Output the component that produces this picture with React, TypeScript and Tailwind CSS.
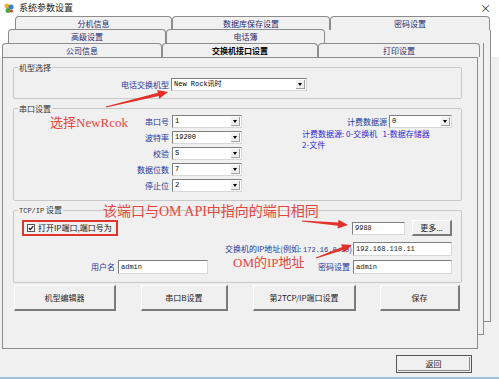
import React from "react";

const ui = "font-['Noto_Sans_CJK_SC','Noto_Sans',sans-serif]";
const mono = "font-['Liberation_Mono','Noto_Sans_CJK_SC',monospace]";
const red = "font-['Liberation_Serif','Noto_Sans_CJK_SC',serif]";

const arrow = (x1: number, y1: number, x2: number, y2: number) => {
  const dx = x2 - x1;
  const dy = y2 - y1;
  const len = Math.hypot(dx, dy);
  const ux = dx / len;
  const uy = dy / len;
  const nx = -uy;
  const ny = ux;
  const nkx = x2 - ux * 10;
  const nky = y2 - uy * 10;
  const p = (x: number, y: number) => `${x.toFixed(1)},${y.toFixed(1)}`;
  return [
    p(x1 + nx * 0.4, y1 + ny * 0.4),
    p(nkx + nx * 1.6, nky + ny * 1.6),
    p(nkx + nx * 4.5, nky + ny * 4.5),
    p(x2, y2),
    p(nkx - nx * 4.5, nky - ny * 4.5),
    p(nkx - nx * 1.6, nky - ny * 1.6),
    p(x1 - nx * 0.4, y1 - ny * 0.4),
  ].join(" ");
};

const Tab = ({ label, w, active }: { label: string; w: string; active?: boolean }) => (
  <div
    className={`${w} relative flex items-center justify-center border border-b-0 border-[#8c8c8c] rounded-t-[4px] bg-[#f0f0f0] text-[8px] ${
      active ? "h-[15px] -mb-[1px] z-10 font-bold text-black" : "h-[14px] text-[#1f2b6e]"
    }`}
  >
    {label}
  </div>
);

const Select = ({ w, value }: { w: string; value: string }) => (
  <div className={`${w} h-[13px] flex items-center bg-white border border-[#7f7f7f] border-r-[#d8d8d8] border-b-[#d8d8d8]`}>
    <span className={`${mono} flex-1 pl-[2px] text-[7px] leading-none text-black`}>{value}</span>
    <div className="w-[9px] h-[9px] mr-[1px] flex items-center justify-center bg-[#f0f0f0] border-r border-b border-[#a0a0a0]">
      <div className="w-0 h-0 border-l-[2px] border-r-[2px] border-t-[3px] border-l-transparent border-r-transparent border-t-black" />
    </div>
  </div>
);

const Input = ({ w, value, h = "h-[14px]" }: { w: string; value: string; h?: string }) => (
  <div className={`${w} ${h} flex items-center bg-white border border-[#7f7f7f] border-r-[#d8d8d8] border-b-[#d8d8d8]`}>
    <span className={`${mono} pl-[2px] text-[7px] leading-none text-[#222]`}>{value}</span>
  </div>
);

const Button = ({ label, w, className = "" }: { label: string; w: string; className?: string }) => (
  <div
    className={`${w} ${className} flex items-center justify-center bg-[#f0f0f0] border-t border-l border-t-white border-l-white border-r-2 border-b-2 border-r-[#7a7a7a] border-b-[#7a7a7a] text-[8px] text-[#222]`}
  >
    {label}
  </div>
);

const Legend = ({ children }: { children: React.ReactNode }) => (
  <legend className="ml-[4px] px-[1px] text-[8px] leading-[11px] text-[#333]">{children}</legend>
);

export default function App() {
  return (
    <div className={`${ui} relative w-[499px] h-[379px] overflow-hidden bg-[#f0f0f0] flex flex-col`}>
      <div className="bg-white">
        <div className="h-[16px] flex items-center pl-[3px] pr-[8px]">
          <svg width="12" height="12" viewBox="0 0 12 12">
            <circle cx="4" cy="4" r="2.5" fill="#f2b01e" />
            <circle cx="8" cy="5" r="2.5" fill="#2f7fd6" />
            <circle cx="5" cy="8.5" r="2.5" fill="#49a83c" />
            <circle cx="8.5" cy="9" r="1.6" fill="#d9412f" />
          </svg>
          <span className="ml-[4px] text-[9px] text-[#222]">系统参数设置</span>
          <span className="ml-auto text-[11px] leading-none text-[#333]">×</span>
        </div>
        <div className="relative h-[14px] pl-[15px] flex">
          <Tab label="分机信息" w="w-[157px]" />
          <Tab label="数据库保存设置" w="w-[158px]" />
          <Tab label="密码设置" w="w-[160px]" />
        </div>
        <div className="relative z-[1] h-[14px] -mt-[1px] pl-[8px] flex">
          <Tab label="高级设置" w="w-[158px]" />
          <Tab label="电话簿" w="w-[159px]" />
        </div>
        <div className="relative z-[2] h-[14px] pl-[2px] flex items-end">
          <Tab label="公司信息" w="w-[160px]" />
          <Tab label="交换机接口设置" w="w-[156px]" active />
          <Tab label="打印设置" w="w-[162px]" />
        </div>
      </div>

      <div className="absolute left-[15px] top-[30px] w-[476px] h-[292px] border-r border-b border-[#8c8c8c] bg-[#f0f0f0]" />
      <div className="absolute left-[8px] top-[43px] w-[476px] h-[292px] border-r border-b border-[#8c8c8c] bg-[#f0f0f0] z-[1]" />

      <div className="relative z-[3] ml-[2px] w-[476px] h-[292px] border border-[#8c8c8c] bg-[#f0f0f0] px-[10px] flex flex-col">
        <fieldset className="mt-[4px] w-[449px] h-[37px] border border-[#c8c8c8] rounded-[2px]">
          <Legend>机型选择</Legend>
          <div className="mt-[5px] flex items-center">
            <span className="w-[157px] pr-[2px] text-right text-[8px] text-[#24369a]">电话交换机型</span>
            <Select w="w-[136px]" value="New Rock讯时" />
          </div>
        </fieldset>

        <fieldset className="mt-[4px] w-[449px] h-[98px] border border-[#c8c8c8] rounded-[2px]">
          <Legend>串口设置</Legend>
          <div className="w-full flex">
            <div className="mt-[1px] flex flex-col gap-[3px]">
              {[
                ["串口号", "1"],
                ["波特率", "19200"],
                ["校验", "S"],
                ["数据位数", "7"],
                ["停止位", "2"],
              ].map(([l, v]) => (
                <div key={l} className="flex items-center h-[13px]">
                  <span className="w-[158px] pr-[3px] text-right text-[8px] text-[#24369a]">{l}</span>
                  <Select w="w-[70px]" value={v} />
                </div>
              ))}
            </div>
            <div className="ml-auto mr-[9px] w-[150px] mt-[1px] flex flex-col">
              <div className="flex items-center justify-end h-[13px]">
                <span className="pr-[2px] text-[8px] text-[#24369a]">计费数据源</span>
                <Select w="w-[63px]" value="0" />
              </div>
              <div className="whitespace-nowrap text-[8px] leading-[12px] text-[#2a2ad0]">
                <div>计费数据源:&nbsp;0-交换机&nbsp;&nbsp;&nbsp;1-数据存储器</div>
                <div className="-mt-[1px]">2-文件</div>
              </div>
            </div>
          </div>
        </fieldset>

        <fieldset className="mt-[3px] w-[449px] h-[79px] border border-[#c8c8c8] rounded-[2px]">
          <Legend>
            <span className={`${mono} text-[7px]`}>TCP/IP</span> 设置
          </Legend>
          <div className="mt-[3px] h-[16px] flex items-center">
            <div className="ml-[8px] w-[96px] h-[16px] flex items-center pl-[3px] border-2 border-[#e0352f]">
              <div className="w-[8px] h-[8px] bg-white border border-[#555] flex items-center justify-center">
                <svg width="6" height="6" viewBox="0 0 6 6">
                  <path d="M0.8 3 L2.4 4.6 L5.2 1.2" fill="none" stroke="#111" strokeWidth="1.2" />
                </svg>
              </div>
              <span className="ml-[3px] text-[8px] text-[#111]">打开IP端口,端口号为</span>
            </div>
            <div className="ml-auto">
              <Input w="w-[53px]" value="9988" h="h-[13px]" />
            </div>
            <Button label="更多..." w="w-[40px]" className="ml-[7px] h-[16px] mr-[9px]" />
          </div>
          <div className="mt-[6px] h-[14px] flex items-center justify-end mr-[9px]">
            <span className="pr-[1px] text-[8px] text-[#24369a]">
              交换机的IP地址(例如: <span className={`${mono} text-[7px]`}>172.16.0.10</span>)
            </span>
            <Input w="w-[99px]" value="192.168.110.11" />
          </div>
          <div className="mt-[4px] h-[14px] flex items-center">
            <span className="w-[101px] text-right text-[8px] text-[#24369a]">用户名</span>
            <div className="ml-[3px]">
              <Input w="w-[90px]" value="admin" />
            </div>
            <span className="ml-auto pr-[3px] text-[8px] text-[#24369a]">密码设置</span>
            <div className="mr-[9px]">
              <Input w="w-[99px]" value="admin" />
            </div>
          </div>
        </fieldset>

        <div className="mt-[2px] h-[26px] flex">
          <Button label="机型编辑器" w="w-[102px]" className="ml-[1px]" />
          <Button label="串口B设置" w="w-[87px]" className="ml-[25px]" />
          <Button label="第2TCP/IP端口设置" w="w-[103px]" className="ml-[25px]" />
          <Button label="保存" w="w-[80px]" className="ml-[24px]" />
        </div>
      </div>

      <div className="mt-[6px] self-end mr-[27px] w-[76px] h-[18px] border border-[#555] bg-[#f0f0f0] p-[1px]">
        <div className="w-full h-full flex items-center justify-center border-r border-b border-[#8a8a8a] text-[8px] text-[#222]">
          返回
        </div>
      </div>
      <div className="mt-auto h-[2px] bg-[#9ec3df]" />

      <div className="absolute inset-0 z-20 pointer-events-none">
        <span className={`${red} absolute left-[50px] top-[116px] text-[13px] leading-none text-[#e5463e]`}>选择NewRcok</span>
        <span className={`${red} absolute left-[103px] top-[205px] text-[14px] leading-none text-[#e5463e]`}>
          该端口与OM API中指向的端口相同
        </span>
        <span className={`${red} absolute left-[233px] top-[256px] text-[13px] leading-none text-[#e5463e]`}>OM的IP地址</span>
        <svg className="absolute inset-0" width="499" height="379">
          <polygon points={arrow(106, 107, 168, 92)} fill="#e2302a" />
          <polygon points={arrow(302, 221, 348, 225)} fill="#e2302a" />
          <polygon points={arrow(316, 258, 352, 245)} fill="#e2302a" />
        </svg>
      </div>
    </div>
  );
}
